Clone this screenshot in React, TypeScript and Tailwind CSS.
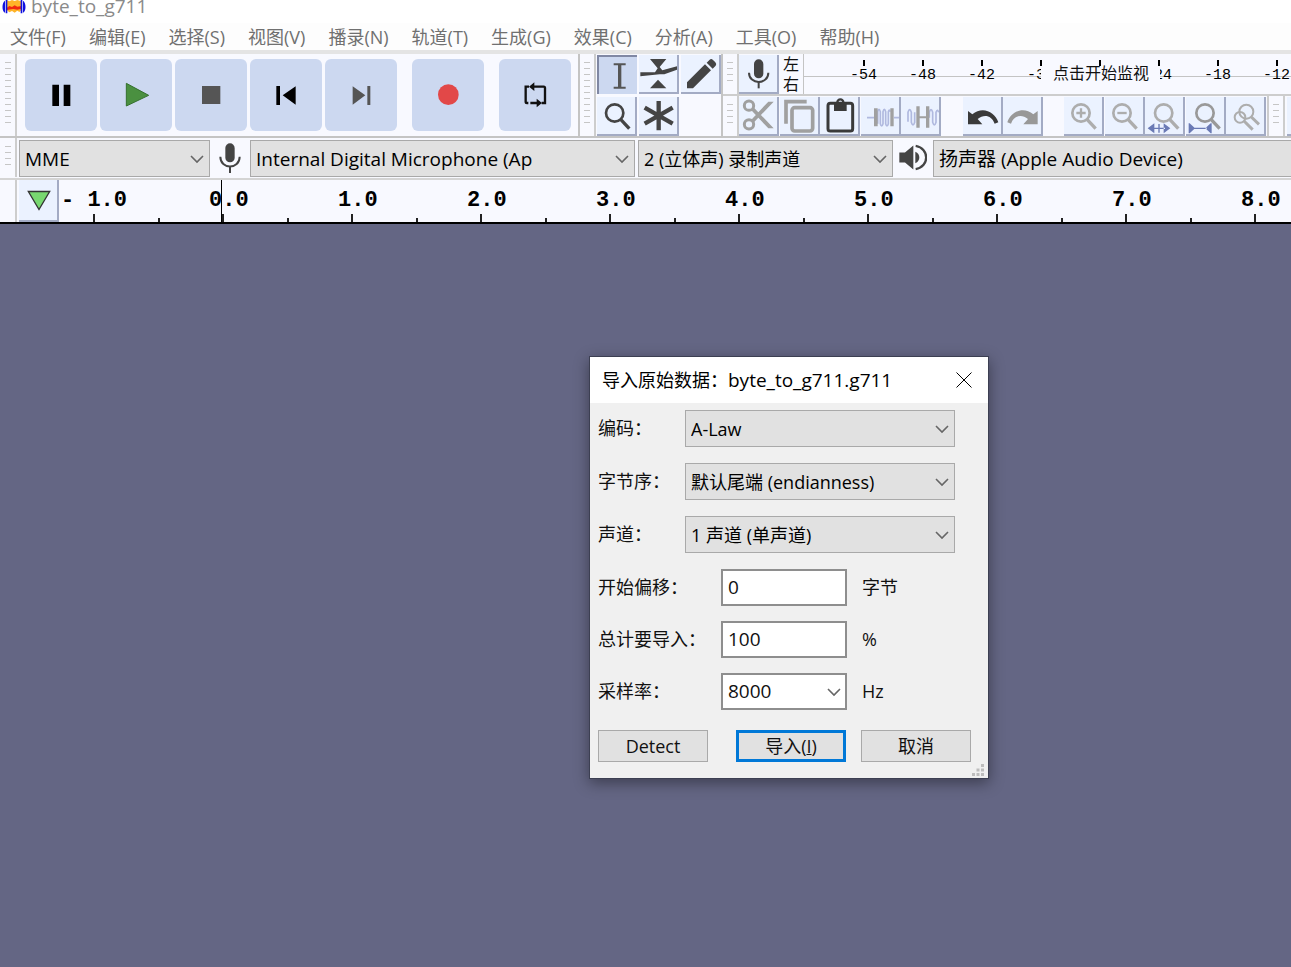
import type { ReactNode } from "react";
import { clsx } from "clsx";

const menus = [
  "文件(F)",
  "编辑(E)",
  "选择(S)",
  "视图(V)",
  "播录(N)",
  "轨道(T)",
  "生成(G)",
  "效果(C)",
  "分析(A)",
  "工具(O)",
  "帮助(H)",
];

// -30 lies wholly under the monitoring hint, so it only gets a tick
const meterMarks = ["-54", "-48", "-42", "-36", "", "-24", "-18", "-12"];

const seconds = ["0.0", "1.0", "2.0", "3.0", "4.0", "5.0", "6.0", "7.0", "8.0"];

const DARK = "#444444";
const GREY = "#a0a0a0";
const BLUE = "#6a7ab5";

/* transport buttons */

interface TransportProps {
  label: string;
  children: ReactNode;
}

const TransportButton = ({ label, children }: TransportProps) => (
  <button aria-label={label} className="size-[72px] shrink-0 rounded-md bg-[#ccd8f0]">
    <svg viewBox="0 0 216 216" className="size-full">
      {children}
    </svg>
  </button>
);

/* small tool buttons */

interface ToolProps {
  label: string;
  active?: boolean;
  children?: ReactNode;
}

const ToolButton = ({ label, active, children }: ToolProps) => (
  <button
    aria-label={label}
    className={clsx(
      "h-[39px] w-10 shrink-0",
      active
        ? "border-t-2 border-l-2 border-[#8088a4] bg-[#ccd8f0]"
        : "border-r-2 border-b-2 border-[#a3abc4] bg-[#ebf2ff]"
    )}
  >
    <svg viewBox="0 0 114 111" className="size-full" fill="none">
      {children}
    </svg>
  </button>
);

const Lens = ({ color, x = 53 }: { color: string; x?: number }) => (
  <g stroke={color}>
    <circle cx={x} cy="48" r="26" strokeWidth="8" />
    <path d={`M${x + 18} 67 L${x + 44} 95`} strokeWidth="10" />
  </g>
);

const MicIcon = () => (
  <svg viewBox="0 0 66 90" className="h-[30px] w-[22px]" fill="none">
    <rect x="19" y="1" width="28" height="57" rx="14" fill={DARK} />
    <path d="M4 41 C4 80 62 80 62 41" stroke={DARK} strokeWidth="6" />
    <path d="M33 70 V90" stroke={DARK} strokeWidth="6" />
  </svg>
);

const SpeakerIcon = () => (
  <svg viewBox="0 0 84 80" className="h-[27px] w-7" fill="none">
    <path d="M1 25 H18 L43 4 V76 L18 55 H1 Z" fill={DARK} />
    <path d="M49 23 C65 28 65 52 49 57 Z" fill={DARK} />
    <path d="M50 5 C92 12 92 68 50 75" stroke={DARK} strokeWidth="7" />
  </svg>
);

const Chevron = () => (
  <svg viewBox="0 0 14 9" className="pointer-events-none absolute top-1/2 right-[6px] h-[9px] w-[14px] -translate-y-1/2" fill="none">
    <path d="M1 1.5 L7 7.5 L13 1.5" stroke="#666" strokeWidth="1.6" />
  </svg>
);

const Gripper = () => (
  <div className="flex shrink-0 justify-center self-stretch border-r-2 border-[#cdcdcd] px-1 py-2">
    <div className="w-[6px] bg-[repeating-linear-gradient(to_bottom,#c6c6c6_0,#c6c6c6_1px,transparent_1px,transparent_6px)]" />
  </div>
);

interface DropDownProps {
  id?: string;
  label?: string;
  value: string;
  className: string;
  arrow?: boolean;
}

const DropDown = ({ id, label, value, className, arrow = true }: DropDownProps) => (
  <div className={clsx("relative h-[37px]", className)}>
    <select
      id={id}
      aria-label={label}
      className="size-full appearance-none rounded-none border border-[#a9a9a9] bg-[#e1e1e1] px-[5px] text-black"
    >
      <option>{value}</option>
    </select>
    {arrow && <Chevron />}
  </div>
);

const TransportBar = () => (
  <div className="flex shrink-0 border-r-2 border-[#c4c4c4]">
    <div className="flex pl-px">
      <Gripper />
    </div>
    <div className="flex gap-[15px] pt-[5px] pr-[7px] pl-2">
      <div className="flex gap-[3px]">
        <TransportButton label="暂停">
          <path d="M82 77 H102 V141 H82 Z M116 77 H136 V141 H116 Z" fill="#000" />
        </TransportButton>
        <TransportButton label="播放">
          <path d="M79 73 L146 109 L79 141 Z" fill="#4a9040" stroke="#35702f" strokeWidth="3" />
        </TransportButton>
        <TransportButton label="停止">
          <path d="M81 81 H136 V135 H81 Z" fill="#555" />
        </TransportButton>
        <TransportButton label="跳至开头">
          <path d="M79 81 H90 V138 H79 Z M98 109 L137 82 V137 Z" fill="#000" />
        </TransportButton>
        <TransportButton label="跳至结尾">
          <path d="M83 82 L121 109 L83 137 Z M127 81 H136 V138 H127 Z" fill="#555" />
        </TransportButton>
      </div>
      <TransportButton label="录制">
        <circle cx="109" cy="107" r="31" fill="#e24848" />
      </TransportButton>
      <TransportButton label="循环">
        <path
          d="M90 83 H80 V128 Q80 132 84 132 H88 M100 83 H134 Q138 83 138 87 V132 H128 M94 132 H114"
          stroke="#111"
          strokeWidth="7"
          fill="none"
        />
        <path d="M90 83 L106 70 V96 Z M129 132 L113 119 V145 Z" fill="#111" />
      </TransportButton>
    </div>
  </div>
);

const ToolsBar = () => (
  <div className="flex shrink-0 border-r-2 border-[#c4c4c4]">
    <Gripper />
    <div className="grid grid-cols-3 content-start gap-x-[2px] gap-y-[3px] pt-px pl-px">
      <ToolButton label="选择工具" active>
        <path d="M44 22 H80 M44 92 H80" stroke="#555" strokeWidth="6" />
        <path d="M62 22 V92" stroke="#555" strokeWidth="10" />
      </ToolButton>
      <ToolButton label="包络工具">
        <path d="M33 12 H82 L62 36 L70 46 L114 34 V44 L76 58 H62 L4 64 V52 H48 L56 40 Z" fill={DARK} />
        <path d="M57 74 L82 100 H33 Z" fill={DARK} />
      </ToolButton>
      <ToolButton label="绘制工具">
        <path d="M18 100 V82 L72 28 L90 46 L36 100 Z M77 23 L86 14 Q91 10 96 15 L103 22 Q108 27 104 32 L95 41 Z" fill={DARK} />
      </ToolButton>
      <ToolButton label="缩放工具">
        <Lens color={DARK} />
      </ToolButton>
      <ToolButton label="多功能工具">
        <path d="M59 12 V100 M17 32 L101 80 M101 32 L17 80" stroke={DARK} strokeWidth="13" />
      </ToolButton>
    </div>
  </div>
);

const Meter = () => (
  <div className="flex h-[42px] border-b-2 border-[#cdcdcd]">
    <Gripper />
    <div className="pt-px">
      <ToolButton label="录制电平">
        <g transform="translate(26 12)">
          <rect x="19" y="1" width="28" height="57" rx="14" fill={DARK} />
          <path d="M4 41 C4 78 62 78 62 41" stroke={DARK} strokeWidth="6" />
          <path d="M33 68 V88" stroke={DARK} strokeWidth="6" />
        </g>
      </ToolButton>
    </div>
    <div className="w-6 shrink-0 pl-1 text-base leading-5">
      <div>左</div>
      <div>右</div>
    </div>
    <div className="relative flex min-w-0 flex-1 overflow-hidden border-l border-[#c4c4c4] pl-[30px] font-['Liberation_Mono','Noto_Sans_CJK_SC',monospace] text-[15px]">
      <div className="absolute inset-x-0 top-[22px] h-px bg-[#c4c4c4]" />
      {meterMarks.map((mark, i) => (
        <div key={i} className="relative flex w-[59px] shrink-0 flex-col items-center pt-[6px]">
          <div className="h-[6px] w-[2px] bg-black" />
          <span className="leading-[20px] text-black">{mark}</span>
        </div>
      ))}
      <div className="absolute top-3 left-[237px] w-[119px] bg-[#f8f9ff] pl-3 text-base leading-[18px]">点击开始监视</div>
    </div>
  </div>
);

const EditBar = () => (
  <div className="flex h-10 overflow-hidden">
    <Gripper />
    <div className="flex shrink-0 pt-px">
      <div className="grid w-[203px] grid-cols-5">
        <ToolButton label="剪切">
          <g stroke={GREY} strokeWidth="9">
            <circle cx="30" cy="26" r="14" />
            <circle cx="30" cy="82" r="14" />
          </g>
          <path d="M37 40 L45 32 L104 94 H88 Z M37 68 L88 14 H104 L45 76 Z" fill={GREY} />
        </ToolButton>
        <ToolButton label="复制">
          <path d="M18 80 V14 H80" stroke={GREY} strokeWidth="11" />
          <rect x="36" y="32" width="62" height="70" rx="8" stroke={GREY} strokeWidth="11" />
        </ToolButton>
        <ToolButton label="粘贴">
          <rect x="24" y="19" width="74" height="83" rx="7" stroke="#3a3a3a" strokeWidth="9" />
          <path d="M42 16 H80 V42 H42 Z" fill="#3a3a3a" />
          <circle cx="61" cy="16" r="9" stroke="#3a3a3a" strokeWidth="7" />
        </ToolButton>
        <ToolButton label="修剪">
          <path d="M18 62 H39 M99 62 H114" stroke="#b0b9df" strokeWidth="5" />
          <path
            d="M50 80 V44 Q54 30 58 44 V80 Q62 94 66 80 V44 Q70 30 74 44 V80 Q78 94 82 80 V44 Q85 34 88 44"
            stroke="#b0b9df"
            strokeWidth="5"
          />
          <path d="M39 34 H50 V88 H39 Z M88 34 H98 V88 H88 Z" fill={GREY} />
        </ToolButton>
        <ToolButton label="静音">
          <path
            d="M21 74 V46 Q26 30 31 46 V76 Q36 92 41 76 V46 M85 62 V46 Q90 30 95 46 V76 Q100 92 105 76 V46 Q109 34 113 46"
            stroke="#b0b9df"
            strokeWidth="5"
          />
          <path d="M46 28 H56 V92 H46 Z M75 28 H85 V92 H75 Z M56 58 H75 V64 H56 Z" fill={GREY} />
        </ToolButton>
      </div>
      <div className="ml-[21px] flex">
        <ToolButton label="撤销">
          <path d="M15 42 L28 52 C58 26 96 44 106 76 L95 80 C86 56 64 50 44 66 L58 82 H15 Z" fill="#3a3a3a" />
        </ToolButton>
        <ToolButton label="重做">
          <path d="M104 42 L91 52 C61 26 23 44 13 76 L24 80 C33 56 55 50 75 66 L61 82 H104 Z" fill="#989898" />
        </ToolButton>
      </div>
      <div className="ml-[21px] grid w-[203px] grid-cols-5">
        <ToolButton label="放大">
          <Lens color="#adadad" x={51} />
          <path d="M37 48 H65 M51 34 V62" stroke="#adadad" strokeWidth="7" />
        </ToolButton>
        <ToolButton label="缩小">
          <Lens color="#adadad" x={51} />
          <path d="M37 48 H65" stroke="#adadad" strokeWidth="7" />
        </ToolButton>
        <ToolButton label="缩放至选区">
          <Lens color="#adadad" x={56} />
          <path d="M8 94 L28 79 V109 Z M76 94 L56 79 V109 Z M24 92 H60 V96 H24 Z M40 81 H44 V107 H40 Z" fill={BLUE} />
        </ToolButton>
        <ToolButton label="适应宽度">
          <Lens color="#999" x={57} />
          <path d="M8 79 H11 L27 94 L11 109 H8 Z M77 79 H74 L58 94 L74 109 H77 Z M24 92 H62 V96 H24 Z" fill={BLUE} />
        </ToolButton>
        <ToolButton label="切换缩放">
          <g stroke="#adadad" strokeWidth="6">
            <circle cx="61" cy="44" r="21" />
            <circle cx="42" cy="61" r="16" />
            <path d="M76 60 L99 82" strokeWidth="9" />
            <path d="M54 72 L80 98" strokeWidth="9" />
          </g>
        </ToolButton>
      </div>
    </div>
    <div className="flex border-l-2 border-[#cdcdcd]">
      <Gripper />
    </div>
    <div className="pt-px pl-[2px]">
      <ToolButton label="工具栏" />
    </div>
  </div>
);

const DeviceBar = () => (
  <div className="flex h-[42px] items-end overflow-hidden border-b-2 border-[#d4d4d4] pb-px text-[19px]">
    <div className="flex self-stretch pl-px">
      <Gripper />
    </div>
    <DropDown label="音频主机" value="MME" className="ml-[2px] w-[191px] shrink-0" />
    <div className="flex w-10 shrink-0 justify-center self-center">
      <MicIcon />
    </div>
    <DropDown label="录制设备" value="Internal Digital Microphone (Ap" className="w-[385px] shrink-0" />
    <DropDown label="录制声道" value="2 (立体声) 录制声道" className="ml-[3px] w-[255px] shrink-0 text-lg" />
    <div className="flex w-10 shrink-0 justify-center self-center">
      <SpeakerIcon />
    </div>
    <DropDown label="播放设备" value="扬声器 (Apple Audio Device)" className="-mr-1 min-w-0 flex-1" arrow={false} />
  </div>
);

const Ticks = ({ first }: { first?: boolean }) => (
  <div className={clsx("flex items-end gap-[63px]", first ? "pl-8" : "pl-[13px]")}>
    <div className="h-2 w-[2px] bg-[#222]" />
    <div className="h-1 w-[2px] bg-[#222]" />
  </div>
);

const Ruler = () => (
  <div className="relative flex h-[44px] overflow-hidden border-b-2 border-black font-['Liberation_Mono',monospace] text-[22px] font-bold text-black">
    <div className="w-[17px] shrink-0 border-r-2 border-[#cdcdcd]" />
    <button aria-label="固定播放头" className="ml-[2px] w-10 shrink-0 border-r-2 border-b-2 border-[#a3abc4] bg-[#ebf2ff] pl-2">
      <svg viewBox="0 0 72 62" className="h-[21px] w-6">
        <path d="M4 4 H68 L36 58 Z" fill="#78d870" stroke="#333" strokeWidth="4" />
      </svg>
    </button>
    <div className="ml-[2px] flex w-[148px] shrink-0 flex-col">
      <span className="h-[34px] leading-[42px] whitespace-pre">- 1.0</span>
      <Ticks first />
    </div>
    {seconds.map((s) => (
      <div key={s} className="flex w-[129px] shrink-0 flex-col">
        <span className="h-[34px] leading-[42px]">{s}</span>
        <Ticks />
      </div>
    ))}
    {/* playhead */}
    <div className="absolute inset-y-0 left-[221px] w-px bg-black" />
  </div>
);

interface FieldProps {
  id: string;
  label: string;
  wide?: boolean;
  unit?: string;
  children: ReactNode;
}

const Field = ({ id, label, wide, unit, children }: FieldProps) => (
  <div className="flex items-center">
    <label htmlFor={id} className={clsx("shrink-0 pb-[2px]", wide ? "w-[87px]" : "w-[123px]")}>
      {label}
    </label>
    {children}
    {unit && <span className="ml-[15px] pb-[2px]">{unit}</span>}
  </div>
);

const inputStyle = "h-[37px] w-[126px] rounded-none border-2 border-[#8e8e8e] bg-white px-[5px] pb-[2px] text-[19px]";
const buttonStyle = "h-8 w-[110px] bg-[#e1e1e1]";

const ImportDialog = () => (
  <div
    role="dialog"
    aria-label="导入原始数据"
    className="absolute top-[132px] left-[589px] w-[400px] border border-[#3c3f52] bg-[#f0f0f0] shadow-[0_4px_14px_rgba(0,0,0,0.4)]"
  >
    <div className="flex h-[46px] items-center justify-between bg-white pr-4 pl-3">
      <h2 className="text-black">
        导入原始数据：<span className="text-[19px]">byte_to_g711.g711</span>
      </h2>
      <button aria-label="关闭">
        <svg viewBox="0 0 16 16" className="size-4">
          <path d="M0.5 0.5 L15.5 15.5 M15.5 0.5 L0.5 15.5" stroke="#000" />
        </svg>
      </button>
    </div>
    <form className="flex flex-col gap-4 px-2 pt-[7px] pb-4">
      <div className="flex flex-col gap-4">
        <Field id="encoding" label="编码：" wide>
          <DropDown id="encoding" value="A-Law" className="w-[270px]" />
        </Field>
        <Field id="order" label="字节序：" wide>
          <DropDown id="order" value="默认尾端 (endianness)" className="w-[270px]" />
        </Field>
        <Field id="channels" label="声道：" wide>
          <DropDown id="channels" value="1 声道 (单声道)" className="w-[270px]" />
        </Field>
      </div>
      <div className="flex flex-col gap-[15px]">
        <Field id="offset" label="开始偏移：" unit="字节">
          <input id="offset" defaultValue="0" className={inputStyle} />
        </Field>
        <Field id="amount" label="总计要导入：" unit="%">
          <input id="amount" defaultValue="100" className={inputStyle} />
        </Field>
        <Field id="rate" label="采样率：" unit="Hz">
          <div className="relative">
            <input id="rate" defaultValue="8000" className={clsx(inputStyle, "block")} />
            <Chevron />
          </div>
        </Field>
      </div>
      <div className="mt-1 flex">
        <button type="button" className={clsx(buttonStyle, "border border-[#a9a9a9]")}>
          Detect
        </button>
        <button type="button" className={clsx(buttonStyle, "ml-7 border-3 border-[#0078d7]")}>
          导入(<u>I</u>)
        </button>
        <button type="button" className={clsx(buttonStyle, "ml-[15px] border border-[#a9a9a9]")}>
          取消
        </button>
      </div>
    </form>
    <svg viewBox="0 0 12 12" className="absolute right-1 bottom-[2px] size-3" fill="#bdbdbd">
      <path d="M9 0 h3 v3 h-3 Z M9 4.5 h3 v3 h-3 Z M9 9 h3 v3 h-3 Z M4.5 4.5 h3 v3 h-3 Z M4.5 9 h3 v3 h-3 Z M0 9 h3 v3 h-3 Z" />
    </svg>
  </div>
);

export default function App() {
  return (
    <div className="flex min-h-screen flex-col overflow-hidden bg-[#f8f9ff] font-['Open_Sans','Noto_Sans_CJK_SC',sans-serif] text-lg leading-6 text-[#111]">
      <header className="flex h-[23px] gap-[5px] overflow-hidden bg-white pl-[2px] text-[#8a8a8a]">
        <svg viewBox="0 0 72 42" className="h-[14px] w-6">
          <path d="M14 0 L22 4 L30 0 L38 3 L46 0 L58 4 V30 L52 36 L46 32 L38 38 L30 33 L22 37 L14 30 Z" fill="#ffb428" />
          <path d="M14 24 L22 18 L30 21 L38 16 L46 20 L58 18 V26 L46 29 L34 27 L14 30 Z" fill="#f02810" />
          <path d="M9 2 V38 C-1 34 -1 8 9 2 Z M63 2 V38 C73 34 73 8 63 2 Z" fill="#1010e0" />
          <path d="M11 0 H16 V40 H11 Z M56 0 H61 V40 H56 Z" fill="#1010e0" />
        </svg>
        <span className="text-[19px] leading-3">byte_to_g711</span>
      </header>
      <nav className="flex h-[31px] items-start gap-[23px] border-b-4 border-[#e4e4e4] bg-[#fdfdfd] pt-[2px] pl-[10px] text-[#707070]">
        {menus.map((m) => (
          <button key={m} className="shrink-0">
            {m}
          </button>
        ))}
      </nav>
      <div className="flex h-[84px] overflow-hidden border-b-2 border-[#c4c4c4]">
        <TransportBar />
        <ToolsBar />
        <div className="flex min-w-0 flex-1 flex-col">
          <Meter />
          <EditBar />
        </div>
      </div>
      <DeviceBar />
      <Ruler />
      <main className="relative flex-1 bg-[#646684]">
        <ImportDialog />
      </main>
    </div>
  );
}
